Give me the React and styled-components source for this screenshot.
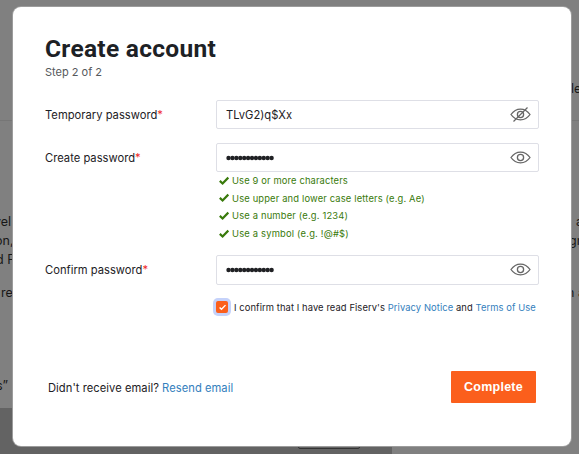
import React from "react";
import styled, { createGlobalStyle } from "styled-components";

const GlobalStyle = createGlobalStyle`
  * { box-sizing: border-box; }
  body {
    margin: 0;
    overflow: hidden;
    background: #808080;
    font-family: Inter, "Liberation Sans", Arial, sans-serif;
    color: #1d2125;
  }
`;

const Page = styled.div`
  display: flex;
  flex-direction: column;
  width: 579px;
  height: 454px;
  overflow: hidden;
`;

const PageHeader = styled.div`
  display: flex;
  justify-content: flex-end;
  align-items: flex-end;
  height: 121px;
  padding-bottom: 23px;
  border-bottom: 1px solid #767676;
`;

const PageBody = styled.div`
  height: 287px;
  padding-top: 93px;
`;

const PageLine = styled.div`
  display: flex;
  justify-content: space-between;
  height: 19px;
  margin-top: ${(p) => p.$gap || 0}px;
  font-size: 13px;
  line-height: 19px;
  white-space: pre;
`;

const Fragment = styled.span`
  width: ${(p) => p.$width || 13}px;
  margin-left: ${(p) => p.$shift || 0}px;
  font-size: 12.5px;
  line-height: 16px;
  color: #171717;
`;

const PageFooter = styled.div`
  display: flex;
  justify-content: flex-end;
  align-items: flex-end;
  width: 392px;
  height: 46px;
  padding: 0 32px 5px 0;
  background: #636363;
`;

const FooterButton = styled.div`
  width: 62px;
  height: 22px;
  border: 1px solid #333;
  border-radius: 2px;
`;

const Modal = styled.main`
  position: absolute;
  top: 7px;
  left: 13px;
  width: 558px;
  height: 439px;
  padding: 26px 32px 0;
  border-radius: 8px;
  background: #fff;
  box-shadow: 0 0 0 1px #9c9c9c;
`;

const Title = styled.h1`
  margin: 0;
  height: 31px;
  font-family: Roboto, "Liberation Sans", sans-serif;
  font-size: 24.5px;
  line-height: 32px;
  letter-spacing: 0.3px;
  white-space: nowrap;
`;

const Step = styled.p`
  margin: 0;
  height: 16px;
  font-size: 11px;
  line-height: 16px;
  letter-spacing: 0;
  color: #55585b;
`;

const Form = styled.form`
  display: flex;
  flex-direction: column;
  padding-top: 20px;
`;

const Field = styled.div`
  display: grid;
  grid-template-columns: 171px 323px;
  margin-bottom: ${(p) => p.$after || 0}px;
`;

const Label = styled.label`
  height: 29px;
  font-size: 11.2px;
  line-height: ${(p) => p.$line || 30}px;
  letter-spacing: 0.01px;
  white-space: nowrap;
`;

const Required = styled.span`
  color: #f02828;
`;

const InputBox = styled.div`
  display: flex;
  align-items: center;
  justify-content: space-between;
  height: ${(p) => p.$height || 29}px;
  padding: 0 7px ${(p) => (p.$height ? 1 : 0)}px 9px;
  border: 1px solid #dedfe6;
  border-radius: 2px;
  font-size: 11.2px;
  letter-spacing: 0;
`;

const Dots = styled.svg`
  width: 50px;
  height: 6px;
`;

const Eye = styled.svg`
  width: 21px;
  height: 17px;
  fill: none;
  stroke: #666;
  stroke-width: 1.3;
`;

const Rules = styled.ul`
  display: flex;
  flex-direction: column;
  margin: 0 0 13px 171px;
  padding: 0 0 0 3px;
  list-style: none;
`;

const Rule = styled.li`
  display: flex;
  align-items: center;
  gap: 3px;
  height: 17.6px;
  font-size: 9.4px;
  line-height: 17.6px;
  letter-spacing: ${(p) => p.$track}px;
  color: #397a0b;
  white-space: nowrap;
`;

const Tick = styled.svg`
  width: ${(p) => p.$size}px;
  height: ${(p) => p.$size}px;
  fill: none;
  stroke: currentColor;
`;

const Consent = styled.div`
  display: flex;
  align-items: center;
  gap: 6px;
  height: 14px;
  margin: 15px 0 0 171px;
  font-size: 9.4px;
  letter-spacing: 0.085px;
  white-space: pre;
`;

const Checkbox = styled.span`
  display: grid;
  place-items: center;
  width: 12px;
  height: 12px;
  border-radius: 2px;
  background: #fb5f1c;
  color: #fff;
  box-shadow: 0 0 0 3px #c5d2fa;
`;

const Link = styled.a`
  color: #3480bd;
`;

const Actions = styled.div`
  display: flex;
  align-items: center;
  justify-content: space-between;
  margin-top: 57px;
  padding: 0 3px;
`;

const Resend = styled.span`
  padding-top: 1px;
  font-size: 11.2px;
  letter-spacing: 0.04px;
  white-space: nowrap;
`;

const Submit = styled.button`
  width: 85px;
  height: 32px;
  padding: 0;
  border: 0;
  border-radius: 1px;
  background: #fb5f1c;
  color: #fff;
  font: bold 12.5px/32px "Liberation Sans", Arial, sans-serif;
  letter-spacing: 0.25px;
`;

function EyeIcon({ hidden }) {
  return (
    <Eye viewBox="0 0 21 17">
      <path d="M1 8.5 C6 1.3 15 1.3 20 8.5 C15 15.7 6 15.7 1 8.5 Z" />
      <circle cx="10.5" cy="8.5" r="3.1" />
      {hidden && <path d="M3.5 15.5 L17.5 1.5" />}
    </Eye>
  );
}

function PasswordDots() {
  return (
    <Dots viewBox="0 0 50 6" fill="#202124">
      {Array.from({ length: 12 }, (_, i) => (
        <circle key={i} cx={2.5 + i * 3.92} cy="3" r="2.2" />
      ))}
    </Dots>
  );
}

function Check({ size, weight }) {
  return (
    <Tick $size={size} viewBox="0 0 10 10" strokeWidth={weight}>
      <path d="M0.8 4.9 L3.6 7.5 L9.3 1.6" />
    </Tick>
  );
}

const rules = [
  ["Use 9 or more characters", 0.13],
  ["Use upper and lower case letters (e.g. Ae)", 0.15],
  ["Use a number (e.g. 1234)", 0.17],
  ["Use a symbol (e.g. !@#$)", 0.19],
];

export default function App() {
  return (
    <>
      <GlobalStyle />
      <Page>
        <PageHeader>
          <Fragment $width={8}>le</Fragment>
        </PageHeader>
        <PageBody>
          <PageLine><Fragment $shift={-6}>vel</Fragment><Fragment $width={3}>a</Fragment></PageLine>
          <PageLine><Fragment $shift={-5}>on,</Fragment><Fragment $width={10}>gr</Fragment></PageLine>
          <PageLine><Fragment $shift={-4}>d F</Fragment></PageLine>
          <PageLine $gap={14}><Fragment $shift={1}>re</Fragment><Fragment $width={12}>n a</Fragment></PageLine>
          <PageLine $gap={74}><Fragment $shift={-4}>s”</Fragment></PageLine>
        </PageBody>
        <PageFooter><FooterButton /></PageFooter>
      </Page>
      <Modal>
        <Title>Create account</Title>
        <Step>Step 2 of 2</Step>
        <Form>
          <Field $after={14}>
            <Label>Temporary password<Required>*</Required></Label>
            <InputBox>TLvG2)q$Xx<EyeIcon hidden /></InputBox>
          </Field>
          <Field>
            <Label $line={31}>Create password<Required>*</Required></Label>
            <InputBox><PasswordDots /><EyeIcon /></InputBox>
          </Field>
          <Rules>
            {rules.map(([text, track]) => (
              <Rule key={text} $track={track}><Check size={10} weight={2.2} />{text}</Rule>
            ))}
          </Rules>
          <Field>
            <Label $line={31}>Confirm password<Required>*</Required></Label>
            <InputBox $height={30}><PasswordDots /><EyeIcon /></InputBox>
          </Field>
          <Consent>
            <Checkbox><Check size={7} weight={2} /></Checkbox>
            <span>I confirm that I have read Fiserv's <Link>Privacy Notice</Link> and <Link>Terms of Use</Link></span>
          </Consent>
          <Actions>
            <Resend>Didn't receive email? <Link>Resend email</Link></Resend>
            <Submit type="button">Complete</Submit>
          </Actions>
        </Form>
      </Modal>
    </>
  );
}
